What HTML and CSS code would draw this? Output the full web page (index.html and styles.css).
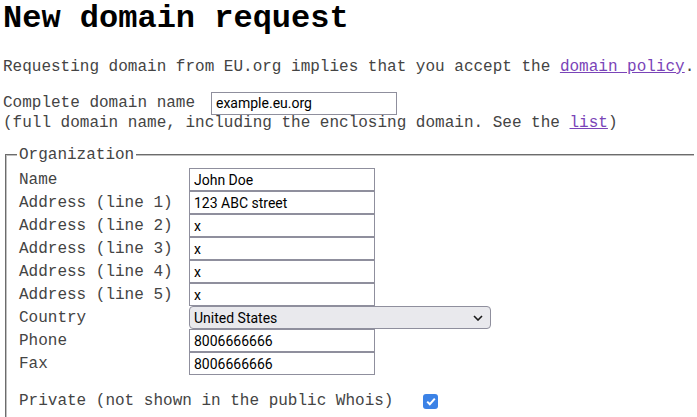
FILE: index.html
```html
<!DOCTYPE html>
<html>
<head>
<meta charset="utf-8">
<title>New domain request</title>
<link rel="stylesheet" href="styles.css">
</head>
<body>
<h1 class="title">New domain request</h1>
<p class="intro">Requesting domain from EU.org implies that you accept the <a class="link" href="#">domain policy</a>.</p>
<p class="domain">
  <span class="domain-row"><span class="domain-label">Complete domain name</span><input class="field" type="text" value="example.eu.org"></span>
  <span class="note">(full domain name, including the enclosing domain. See the <a class="link" href="#">list</a>)</span>
</p>
<fieldset class="org">
  <legend class="org-legend">Organization</legend>
  <div class="grid">
    <label class="lbl">Name</label><input class="field" type="text" value="John Doe">
    <label class="lbl">Address (line 1)</label><input class="field" type="text" value="123 ABC street">
    <label class="lbl">Address (line 2)</label><input class="field" type="text" value="x">
    <label class="lbl">Address (line 3)</label><input class="field" type="text" value="x">
    <label class="lbl">Address (line 4)</label><input class="field" type="text" value="x">
    <label class="lbl">Address (line 5)</label><input class="field" type="text" value="x">
    <label class="lbl">Country</label>
    <div class="select"><span>United States</span><svg class="chev" width="10" height="6" viewBox="0 0 10 6"><path d="M1 1 L5 5 L9 1" fill="none" stroke="#1a1a1a" stroke-width="1.6"/></svg></div>
    <label class="lbl">Phone</label><input class="field" type="text" value="8006666666">
    <label class="lbl">Fax</label><input class="field" type="text" value="8006666666">
  </div>
  <div class="private">
    <span class="lbl">Private (not shown in the public Whois)</span>
    <span class="check"><svg width="10" height="9" viewBox="0 0 10 9"><path d="M1.2 4.6 L3.8 7.2 L8.8 1.6" fill="none" stroke="#fff" stroke-width="2"/></svg></span>
  </div>
</fieldset>
</body>
</html>
```
FILE: styles.css
```css
html, body {
  overflow: hidden;
}
body {
  margin: 0 3px;
  font-family: "Liberation Mono", "Courier New", monospace;
  font-size: 16px;
  color: #444;
}
.title {
  margin: 0 0 21px;
  font-size: 32px;
  font-weight: bold;
  color: #000;
}
.intro {
  margin: 0 0 16px;
  white-space: nowrap;
}
.link {
  color: #7a44b8;
}
.domain {
  margin: 0 0 14px;
}
.domain-row {
  display: flex;
  align-items: center;
  height: 22px;
}
.domain-label {
  width: 208px;
}
.domain-row .field {
  width: 186px;
  height: 23px;
}
.note {
  display: block;
  margin-top: 0;
  white-space: nowrap;
}
.field {
  box-sizing: border-box;
  width: 186px;
  height: 23px;
  margin: 0;
  padding: 0 4px;
  border: 1px solid #8f8f9d;
  border-radius: 0;
  font-family: Roboto, "Open Sans", sans-serif;
  font-size: 14px;
  color: #000;
  background: #fff;
}
.org {
  margin: 0 -20px 0 2px;
  padding: 0 12px 12px;
  border: 2px groove #c0c0c0;
  border-right: none;
}
.org-legend {
  padding: 0 2px;
  margin-left: -2px;
}
.grid {
  display: grid;
  grid-template-columns: 170px auto;
  grid-auto-rows: 23px;
  align-items: center;
  justify-items: start;
  margin-top: 4px;
}
.lbl {
  line-height: 18px;
}
.select {
  box-sizing: border-box;
  width: 302px;
  height: 23px;
  display: flex;
  align-items: center;
  justify-content: space-between;
  padding: 0 7px 0 4px;
  border: 1px solid #8f8f9d;
  border-radius: 4px;
  background: #e9e9ed;
  font-family: Roboto, "Open Sans", sans-serif;
  font-size: 14px;
  color: #000;
}
.private {
  display: flex;
  align-items: center;
  margin-top: 17px;
}
.check {
  margin-left: 30px;
  width: 15px;
  height: 15px;
  border-radius: 3px;
  background: #3b82e6;
  display: flex;
  align-items: center;
  justify-content: center;
}
```
